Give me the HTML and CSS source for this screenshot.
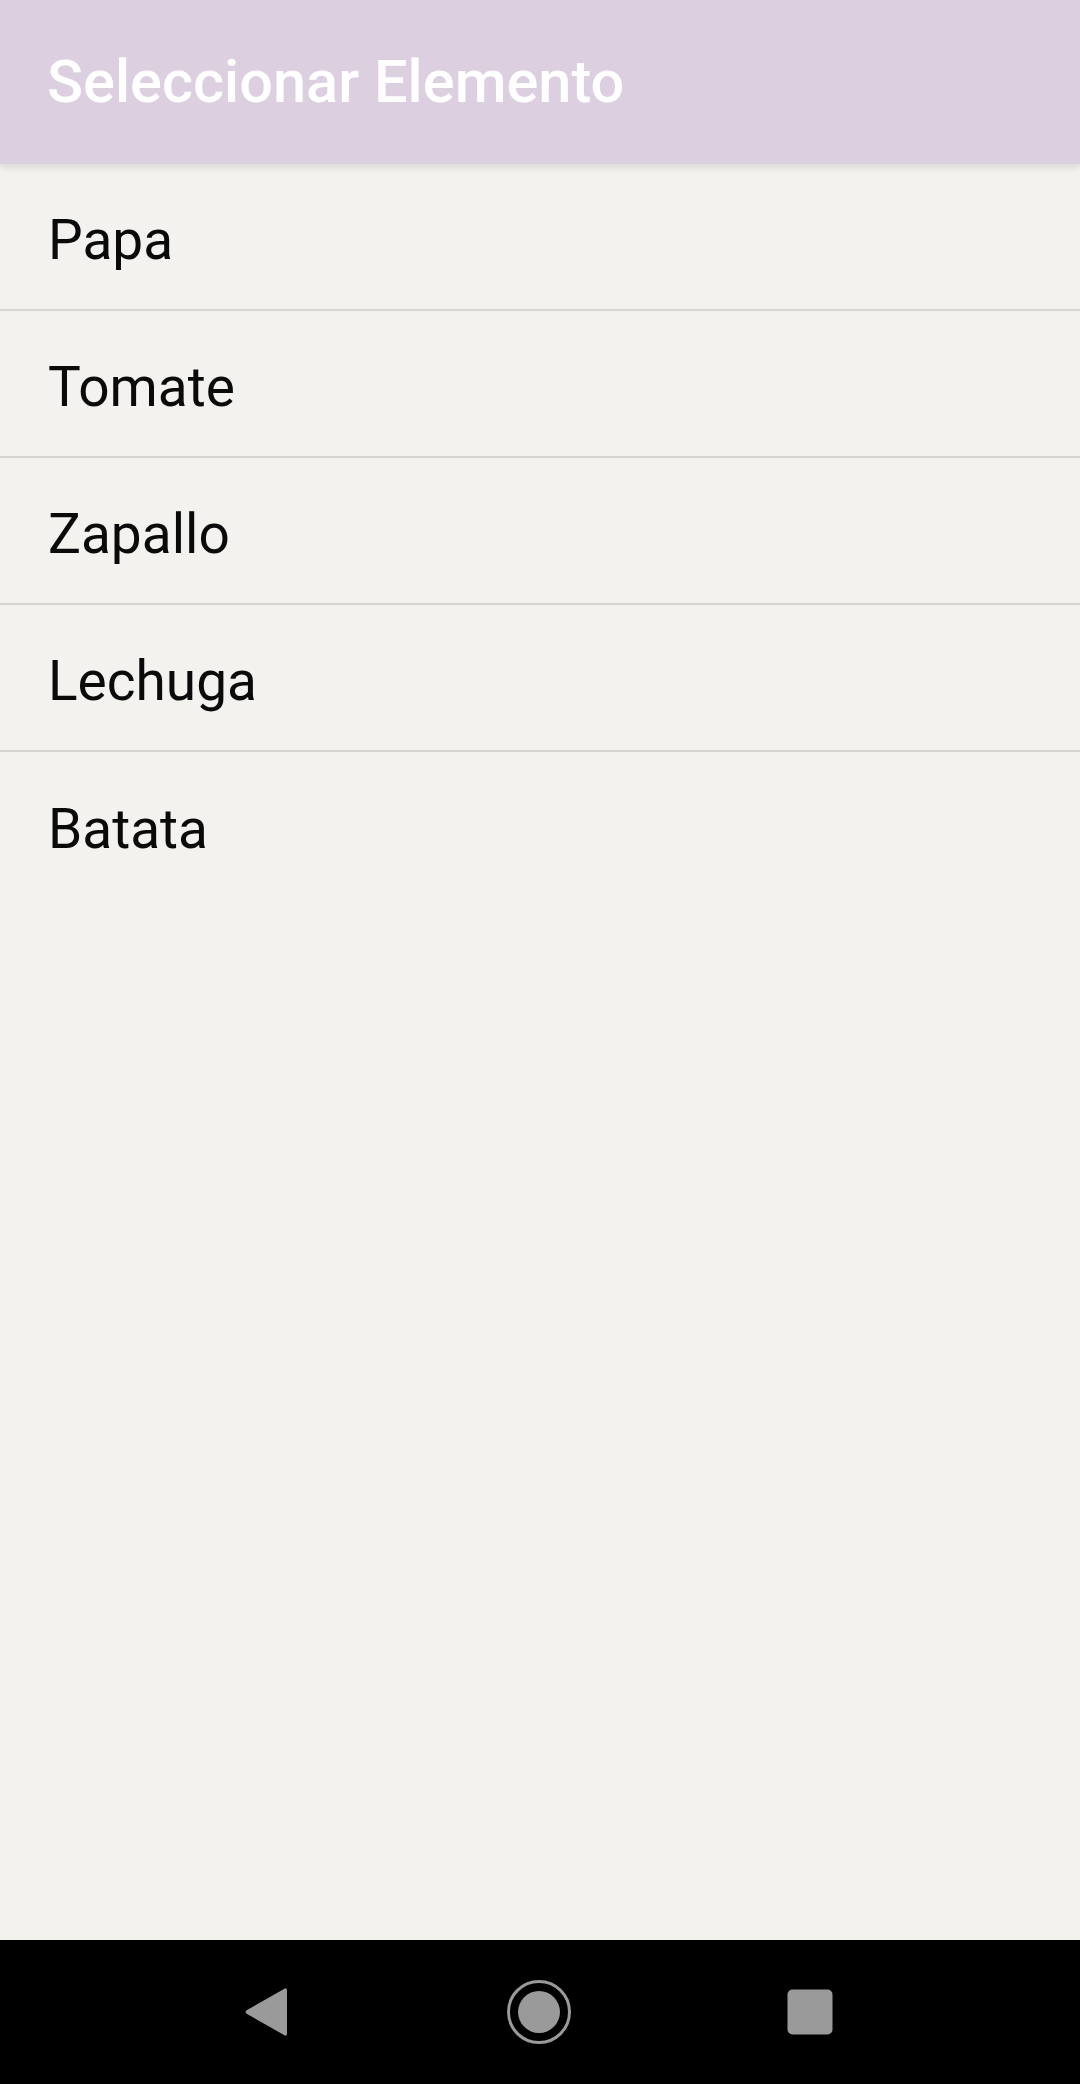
FILE: index.html
```html
<!DOCTYPE html>
<html lang="es">
<head>
<meta charset="utf-8">
<title>Seleccionar Elemento</title>
<link rel="stylesheet" href="styles.css">
</head>
<body>
<div class="screen">
  <header class="appbar">
    <h1 class="appbar-title">Seleccionar Elemento</h1>
  </header>
  <main class="content">
    <ul class="list">
      <li class="list-item">Papa</li>
      <li class="list-item">Tomate</li>
      <li class="list-item">Zapallo</li>
      <li class="list-item">Lechuga</li>
      <li class="list-item">Batata</li>
    </ul>
  </main>
  <nav class="navbar">
    <svg class="nav-icon nav-back" width="46" height="52" viewBox="0 0 46 52">
      <path d="M41 3 Q44 1 44 5 L44 47 Q44 51 41 49 L4 28 Q1 26 4 24 Z" fill="#9a9a9a"/>
    </svg>
    <svg class="nav-icon nav-home" width="66" height="66" viewBox="0 0 66 66">
      <circle cx="33" cy="33" r="30.5" fill="none" stroke="#9a9a9a" stroke-width="3"/>
      <circle cx="33" cy="33" r="21" fill="#9a9a9a"/>
    </svg>
    <svg class="nav-icon nav-recent" width="46" height="46" viewBox="0 0 46 46">
      <rect x="0.5" y="0.5" width="45" height="45" rx="5" fill="#9a9a9a"/>
    </svg>
  </nav>
</div>
</body>
</html>
```
FILE: styles.css
```css
html, body {
  margin: 0;
  padding: 0;
}
body {
  background: #f3f2ee;
  font-family: Roboto, "Noto Sans", sans-serif;
}
.screen {
  display: flex;
  flex-direction: column;
  width: 1080px;
  height: 2084px;
  overflow: hidden;
}
.appbar {
  height: 164px;
  flex: 0 0 164px;
  background: #dbcfe0;
  display: flex;
  align-items: center;
  padding-left: 47px;
  box-sizing: border-box;
  box-shadow: 0 3px 8px rgba(0, 0, 0, 0.12);
  position: relative;
  z-index: 1;
}
.appbar-title {
  margin: 0;
  color: #ffffff;
  font-size: 59.5px;
  font-weight: 500;
  letter-spacing: 0;
}
.content {
  flex: 1;
  background: #f3f2ee;
}
.list {
  list-style: none;
  margin: 0;
  padding: 0;
}
.list-item {
  height: 147px;
  box-sizing: border-box;
  display: flex;
  align-items: center;
  padding-left: 48px;
  padding-top: 6px;
  font-size: 55px;
  color: #0a0a0a;
  border-bottom: 2px solid #d6d4d0;
}
.list-item:last-child {
  border-bottom: none;
}
.navbar {
  flex: 0 0 144px;
  height: 144px;
  background: #000;
  display: flex;
  align-items: center;
  justify-content: flex-start;
  padding-left: 243px;
  box-sizing: border-box;
}
.nav-icon {
  display: block;
}
.nav-back {
  margin-right: 217px;
}
.nav-home {
  margin-right: 215px;
}
```
